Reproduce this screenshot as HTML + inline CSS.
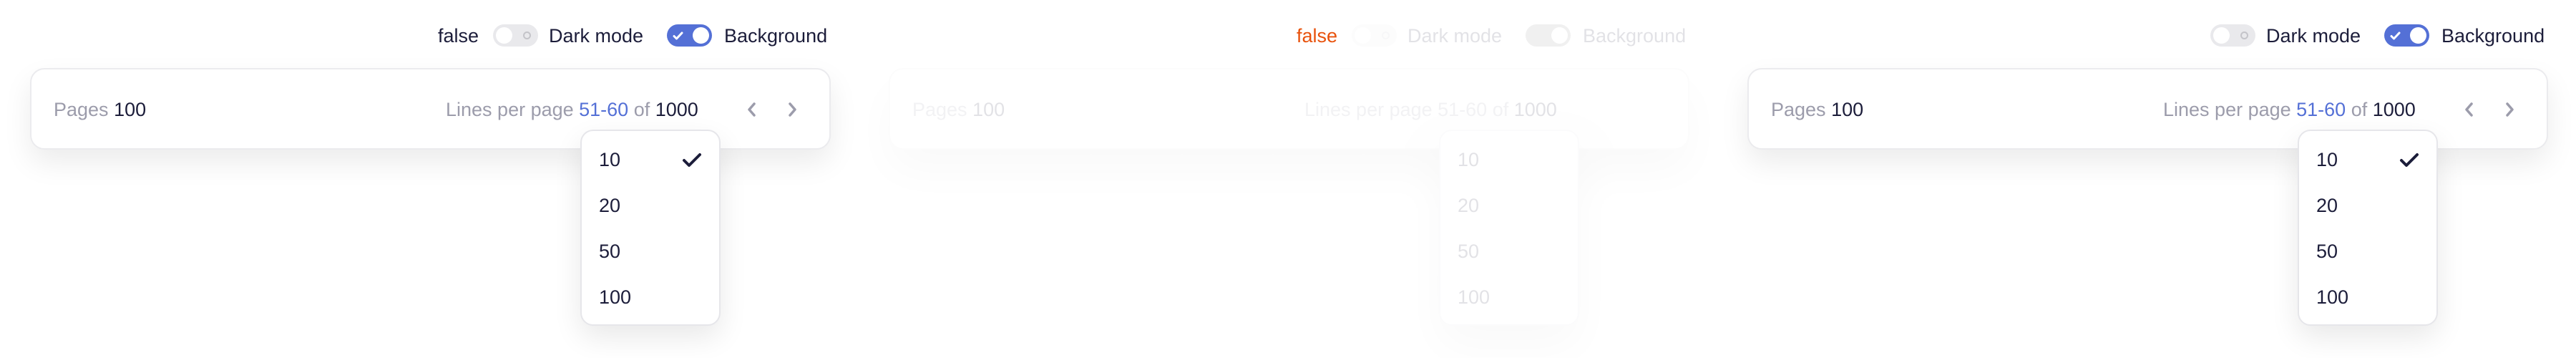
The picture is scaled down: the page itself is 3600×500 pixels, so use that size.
<!DOCTYPE html>
<html><head><meta charset="utf-8"><style>
*{margin:0;padding:0;box-sizing:border-box}
body{width:3600px;height:500px;background:#fff;font-family:"Liberation Sans",sans-serif;position:relative;overflow:hidden}
.p{position:absolute;top:0;width:1200px;height:500px}
.t{position:absolute;font-size:27px;line-height:32px;color:#1c1d3a;white-space:nowrap}
.tg{position:absolute;top:34px;width:63px;height:31px;border-radius:16px}
.off{background:#e9e9ec}
.off .k{position:absolute;left:4px;top:4px;width:23px;height:23px;border-radius:50%;background:#fff}
.off .o{position:absolute;left:42px;top:10px;width:11px;height:11px;border-radius:50%;border:2px solid #c4c4c9}
.on{background:#5470d6}
.on .k{position:absolute;right:4px;top:4px;width:23px;height:23px;border-radius:50%;background:#fff}
.card{position:absolute;left:42px;top:95px;width:1119px;height:114px;border-radius:20px;background:#fff;border:2px solid #ebebee;box-shadow:0 18px 40px rgba(0,0,0,.08)}
.g{color:#9c9cab}.b{color:#5470d6}
.dd{position:absolute;left:811px;top:181px;width:196px;height:274px;border-radius:18px;background:#fff;border:2px solid #e6e6ea;box-shadow:0 16px 40px rgba(0,0,0,.09)}
.dd .t{left:24px}
</style></head><body>
<div class="p" style="left:0">
 <div class="t" style="left:612px;top:34px">false</div>
 <div class="tg off" style="left:689px"><div class="k"></div><div class="o"></div></div>
 <div class="t" style="left:767px;top:34px">Dark mode</div>
 <div class="tg on" style="left:932px"><div class="k"></div><svg style="position:absolute;left:8px;top:8px" width="16" height="16" viewBox="0 0 16 16"><path d="M2 8.5l3.5 3.5L13 4" stroke="#fff" stroke-width="3" fill="none" stroke-linecap="round" stroke-linejoin="round"/></svg></div>
 <div class="t" style="left:1012px;top:34px">Background</div>
 <div class="card">
  <div class="t g" style="left:31px;top:40px">Pages <span style="color:#1c1d3a">100</span></div>
  <div class="t g" style="left:579px;top:40px">Lines per page <span class="b">51-60</span> of <span style="color:#1c1d3a">1000</span></div>
  <svg style="position:absolute;left:1000px;top:46px" width="14" height="20" viewBox="0 0 14 20"><path d="M10 2L3 10l7 8" stroke="#9c9cab" stroke-width="3.5" fill="none" stroke-linecap="round" stroke-linejoin="round"/></svg>
  <svg style="position:absolute;left:1056px;top:46px" width="14" height="20" viewBox="0 0 14 20"><path d="M4 2l7 8-7 8" stroke="#9c9cab" stroke-width="3.5" fill="none" stroke-linecap="round" stroke-linejoin="round"/></svg>
 </div>
 <div class="dd">
  <div class="t" style="top:24px">10</div>
  <svg style="position:absolute;left:140px;top:30px" width="28" height="22" viewBox="0 0 28 22"><path d="M3 11l7 7L25 3" stroke="#1c1d3a" stroke-width="4" fill="none" stroke-linecap="round" stroke-linejoin="round"/></svg>
  <div class="t" style="top:88px">20</div>
  <div class="t" style="top:152px">50</div>
  <div class="t" style="top:216px">100</div>
 </div>
</div>
<div class="p" style="left:1200px">
 <div class="t" style="left:612px;top:34px;color:#e8520c">false</div>
 <div style="position:absolute;inset:0;opacity:.12">
 <div class="tg off" style="left:689px"><div class="k"></div><div class="o"></div></div>
 <div class="t" style="left:767px;top:34px">Dark mode</div>
 <div class="tg on" style="left:932px;background:#888"><div class="k"></div></div>
 <div class="t" style="left:1012px;top:34px">Background</div>
 <div class="card" style="box-shadow:0 30px 60px rgba(0,0,0,.2)">
  <div class="t g" style="left:31px;top:40px">Pages <span style="color:#1c1d3a">100</span></div>
  <div class="t g" style="left:579px;top:40px">Lines per page <span>51-60</span> of <span style="color:#1c1d3a">1000</span></div>
 </div>
 <div class="dd" style="box-shadow:0 30px 60px rgba(0,0,0,.2)">
  <div class="t" style="top:24px">10</div>
  <div class="t" style="top:88px">20</div>
  <div class="t" style="top:152px">50</div>
  <div class="t" style="top:216px">100</div>
 </div>
 </div>
</div>
<div class="p" style="left:2400px">
 <div class="tg off" style="left:689px"><div class="k"></div><div class="o"></div></div>
 <div class="t" style="left:767px;top:34px">Dark mode</div>
 <div class="tg on" style="left:932px"><div class="k"></div><svg style="position:absolute;left:8px;top:8px" width="16" height="16" viewBox="0 0 16 16"><path d="M2 8.5l3.5 3.5L13 4" stroke="#fff" stroke-width="3" fill="none" stroke-linecap="round" stroke-linejoin="round"/></svg></div>
 <div class="t" style="left:1012px;top:34px">Background</div>
 <div class="card">
  <div class="t g" style="left:31px;top:40px">Pages <span style="color:#1c1d3a">100</span></div>
  <div class="t g" style="left:579px;top:40px">Lines per page <span class="b">51-60</span> of <span style="color:#1c1d3a">1000</span></div>
  <svg style="position:absolute;left:1000px;top:46px" width="14" height="20" viewBox="0 0 14 20"><path d="M10 2L3 10l7 8" stroke="#9c9cab" stroke-width="3.5" fill="none" stroke-linecap="round" stroke-linejoin="round"/></svg>
  <svg style="position:absolute;left:1056px;top:46px" width="14" height="20" viewBox="0 0 14 20"><path d="M4 2l7 8-7 8" stroke="#9c9cab" stroke-width="3.5" fill="none" stroke-linecap="round" stroke-linejoin="round"/></svg>
 </div>
 <div class="dd">
  <div class="t" style="top:24px">10</div>
  <svg style="position:absolute;left:140px;top:30px" width="28" height="22" viewBox="0 0 28 22"><path d="M3 11l7 7L25 3" stroke="#1c1d3a" stroke-width="4" fill="none" stroke-linecap="round" stroke-linejoin="round"/></svg>
  <div class="t" style="top:88px">20</div>
  <div class="t" style="top:152px">50</div>
  <div class="t" style="top:216px">100</div>
 </div>
</div>
</body></html>
